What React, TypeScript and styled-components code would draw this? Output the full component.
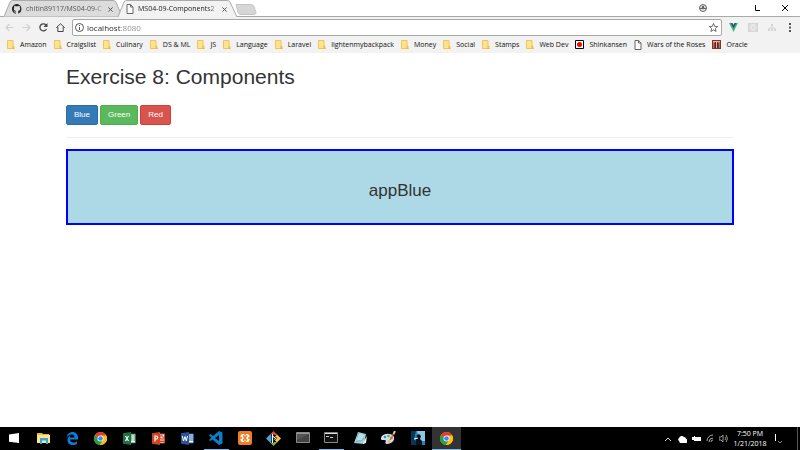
import React, { useState } from "react";
import styled, { createGlobalStyle, css } from "styled-components";

const GlobalStyle = createGlobalStyle`
  * { box-sizing: border-box; }
  body { margin: 0; background: #fff; }
  button, input { font: inherit; margin: 0; }
`;

const ui = `"Open Sans", "Noto Sans", sans-serif`;
const page = `"Liberation Sans", Arial, sans-serif`;

const Screen = styled.div`
  min-height: 100vh;
  display: flex;
  flex-direction: column;
  font-family: ${ui};
  font-size: 7px;
  line-height: 10px;
  color: #222;
`;

const TabStrip = styled.header`
  display: flex;
  align-items: stretch;
  height: 17px;
  padding-left: 4px;
  background: #fff;
  border-bottom: 1px solid #a9a9a9;
`;

const Tab = styled.div<{ $active?: boolean }>`
  position: relative;
  width: 120px;
  height: 17px;
  margin-right: -6px;
  padding: 1px 11px 0 8px;
  display: flex;
  align-items: center;
  gap: 4px;
  z-index: ${(p) => (p.$active ? 2 : 1)};
`;

const TabShape = styled.svg`
  position: absolute;
  inset: 0;
  width: 120px;
  height: 17px;
  z-index: -1;
`;

const TabTitle = styled.span<{ $dim?: boolean }>`
  flex: 1;
  white-space: nowrap;
  color: ${(p) => (p.$dim ? "#555" : "#222")};
  mask-image: linear-gradient(90deg, #000 85%, rgb(0 0 0 / 30%));
`;

const IconButton = styled.button`
  border: 0;
  padding: 0;
  background: none;
  color: #555;
  display: grid;
  place-items: center;
  flex: none;
`;

const NewTab = styled(IconButton)`
  margin-left: 3px;
  align-self: flex-start;
  margin-top: 4px;
`;

const WindowControls = styled.div`
  margin-left: auto;
  padding-right: 12px;
  display: flex;
  align-items: center;
  gap: 21px;
`;

const Toolbar = styled.nav`
  height: 21px;
  display: flex;
  align-items: center;
  gap: 7px;
  padding: 0 6px 0 5px;
  background: #f2f2f2;
`;

const NavButtons = styled.div`
  display: flex;
  gap: 8px;
`;

const AddressBar = styled.label`
  flex: 1;
  height: 17px;
  display: flex;
  align-items: center;
  gap: 3px;
  padding: 0 3px 0 2px;
  border: 1px solid #a5aaa5;
  border-radius: 2px;
  background: #fff;
`;

const AddressInput = styled.input`
  flex: 1;
  min-width: 0;
  height: 12px;
  border: 0;
  padding: 0;
  outline: 0;
  font-size: 8px;
  color: transparent;
  background: linear-gradient(90deg, #222 34px, #888 34px);
  background-clip: text;
`;

const Extensions = styled.div`
  display: flex;
  align-items: center;
  gap: 10px;
`;

const Bookmarks = styled.nav`
  height: 15px;
  display: flex;
  align-items: center;
  gap: 7px;
  padding: 0 7px 2px;
  background: #f2f2f2;
  overflow: hidden;
`;

const Bookmark = styled.a`
  display: flex;
  align-items: center;
  gap: 5px;
  flex: none;
  color: #111;
  text-decoration: none;
  white-space: nowrap;
`;

const Main = styled.main`
  flex: 1;
  width: calc(100% - 132px);
  margin: 0 auto;
  font-family: ${page};
  color: #333;
`;

const Title = styled.h1`
  margin: 12px 0 16px;
  font-size: 21px;
  line-height: 24px;
  font-weight: 400;
`;

const ButtonRow = styled.div`
  display: flex;
  gap: 2px;
`;

const tones = {
  blue: css`background: #337ab7; border-color: #2e6da4;`,
  green: css`background: #5cb85c; border-color: #4cae4c;`,
  red: css`background: #d9534f; border-color: #d43f3a;`,
};

const ColorButton = styled.button<{ $tone: keyof typeof tones }>`
  height: 20px;
  padding: 0 7px;
  border: 1px solid;
  border-radius: 2px;
  font-size: 8px;
  line-height: 12px;
  color: #fff;
  ${(p) => tones[p.$tone]}
`;

const Divider = styled.hr`
  margin: 12px 0 11px;
  border: 0;
  border-top: 1px solid #eee;
`;

const Panel = styled.section<{ $fill: string; $edge: string }>`
  padding: 30px 12px 22px;
  border: 2px solid ${(p) => p.$edge};
  background: ${(p) => p.$fill};
  text-align: center;
`;

const PanelTitle = styled.h2`
  margin: 0;
  font-size: 17px;
  line-height: 20px;
  font-weight: 400;
`;

const Taskbar = styled.footer`
  height: 23px;
  display: flex;
  justify-content: space-between;
  background: #000;
  color: #fff;
`;

const Apps = styled.div`
  width: 461px;
  display: grid;
  grid-template-columns: repeat(16, 1fr);
`;

const AppButton = styled.button<{ $state?: string }>`
  border: 0;
  padding: 0 0 1px;
  margin: 0 ${(p) => (p.$state === "open" ? 2 : 0)}px;
  display: grid;
  place-items: center;
  background: ${(p) => (p.$state === "active" ? "#333" : "none")};
  box-shadow: ${(p) => (p.$state ? "inset 0 -1px #76b9ed" : "none")};
`;

const Tray = styled.div`
  display: flex;
  align-items: center;
  gap: 5px;
  padding-right: 1px;
`;

const Clock = styled.time`
  width: 34px;
  text-align: center;
  line-height: 10px;
  white-space: nowrap;
`;

const ShowDesktop = styled.button`
  width: 2px;
  height: 23px;
  padding: 0;
  margin-left: 6px;
  border: 0;
  border-left: 1px solid #555;
  background: none;
`;

const Folder = () => (
  <svg width="8" height="9" viewBox="0 0 8 9">
    <path d="M0.5 0.5h5.5v5.5h1v2.5h-6.500z" fill="#ffe391" stroke="#eec654" />
    <path d="M6 6v2.500h1.500" fill="none" stroke="#e5b73d" />
  </svg>
);

const FileIcon = () => (
  <svg width="8" height="10" viewBox="0 0 8 10">
    <path d="M1 .5h3.500L7 3v6.500H1z" fill="#fff" stroke="#666" />
    <path d="M4.500.5V3H7" fill="none" stroke="#666" />
  </svg>
);

const Flag = () => (
  <svg width="9" height="9" viewBox="0 0 9 9">
    <path d="M.5.5h8v8h-8z" fill="#fff" stroke="#000" />
    <circle cx="4.500" cy="4.500" r="2.500" fill="#e00" />
  </svg>
);

const OracleIcon = () => (
  <svg width="9" height="9" viewBox="0 0 9 9">
    <path d="M0 0h9v9H0z" fill="#8b3024" />
    <path d="M2 1v7M4.500 1v7M7 1v7M1 1.500h7" stroke="#d9b7aa" />
    <path d="M3 3v5M6 3v5" stroke="#3a1712" />
  </svg>
);

const GitHub = () => (
  <svg width="10" height="10" viewBox="0 0 16 16">
    <path fill="#222" d="M8 0C3.580 0 0 3.580 0 8c0 3.540 2.290 6.530 5.470 7.590.4.070.55-.17.55-.38v-1.500C4 14.150 3.480 12.700 3.350 12.350c-.1-.23-.48-.94-.82-1.130-.28-.15-.68-.52-.01-.53.63-.01 1.080.58 1.230.82.720 1.210 1.870.87 2.330.66.070-.52.280-.87.510-1.070-1.780-.2-3.640-.89-3.640-3.950 0-.87.310-1.590.820-2.150-.08-.2-.36-1.020.080-2.120 0 0 .67-.21 2.200.82a7.600 7.600 0 0 1 4 0c1.530-1.040 2.200-.82 2.200-.82.440 1.100.160 1.920.080 2.120.510.560.820 1.270.820 2.150 0 3.070-1.870 3.750-3.650 3.950.290.250.540.730.540 1.480v2.200c0 .21.150.46.550.38A8 8 0 0 0 8 0z" />
  </svg>
);

const Close = ({ size = 5 }: { size?: number }) => (
  <svg width={size} height={size} viewBox="0 0 6 6">
    <path d="M.5.5l5 5M5.500.5l-5 5" stroke="currentColor" strokeWidth="1.200" />
  </svg>
);

const Arrow = ({ back }: { back?: boolean }) => (
  <svg width="9" height="9" viewBox="0 0 9 9" fill="none" stroke="#d0d0d0" strokeWidth="1.200">
    <path d={back ? "M8.500 4.500H1M4.500 1L1 4.500 4.500 8" : "M.5 4.500H8M4.500 1L8 4.500 4.500 8"} />
  </svg>
);

const Chrome = () => (
  <svg width="13" height="13" viewBox="0 0 26 26">
    <circle cx="13" cy="13" r="13" fill="#fbc116" />
    <path d="M13 13L1.700 6.500A13 13 0 0 1 24.300 6.500z" fill="#e33b2e" />
    <path d="M13 13L1.700 6.500A13 13 0 0 0 12 26L18.600 16z" fill="#2c9d48" />
    <path d="M13 7h11.600a13 13 0 0 1-12.600 19l6.500-10z" fill="#fbc116" />
    <circle cx="13" cy="13" r="6" fill="#fff" />
    <circle cx="13" cy="13" r="4.600" fill="#4285f4" />
  </svg>
);

const Office = ({ color, kind }: { color: string; kind: "excel" | "powerpoint" | "word" }) => (
  <svg width="13" height="13" viewBox="0 0 13 13">
    <path d="M6 2h6.500v9H6z" fill="#fff" stroke={color} />
    {kind === "excel" && <path d="M8 4h1.500M10.500 4H12M8 6h1.500M10.500 6H12M8 8h1.500M10.500 8H12" stroke={color} strokeWidth="1" />}
    {kind === "powerpoint" && <path d="M8 8h4M8 9.500h4M10 3v2h2a2 2 0 1 1-2-2" stroke={color} fill="none" />}
    {kind === "word" && <path d="M7 4h5M7 6h5M7 8h5" stroke={color} />}
    <path d="M0 1.300L8 0v13l-8-1.300z" fill={color} />
    {kind === "excel" && <path d="M2.500 4l3 5M5.500 4l-3 5" stroke="#fff" strokeWidth="1.200" />}
    {kind === "powerpoint" && <path d="M3 9.500V4h1.200a1.500 1.500 0 0 1 0 3H3" stroke="#fff" fill="none" strokeWidth="1.200" />}
    {kind === "word" && <path d="M1.300 4l1.200 5L4 4.500 5.300 9l1.200-5" stroke="#fff" fill="none" />}
  </svg>
);

const Terminal = ({ prompt }: { prompt?: boolean }) => (
  <svg width="14" height="12" viewBox="0 0 14 12">
    <path d="M.5.5h13v10H.5z" fill={prompt ? "#111" : "#444"} stroke="#888" />
    <path d="M1 1.500h12" stroke={prompt ? "#ddd" : "#999"} />
    {prompt ? <path d="M2 4.500h3M6 5.500h3" stroke="#ccc" /> : <path d="M1 2h12L1 8z" fill="#555" />}
  </svg>
);

const taskApps: { name: string; state?: string; icon: React.ReactNode }[] = [
  { name: "Start", icon: <svg width="10" height="10" viewBox="0 0 10 10"><path d="M0 1.500L10 0v10L0 8.800z" fill="#fff" /></svg> },
  { name: "File Explorer", icon: <svg width="13" height="12" viewBox="0 0 13 12"><path d="M0 1h5l1 1h6v9H0z" fill="#e9b93f" /><path d="M0 3h13v8H0z" fill="#fde48d" /><path d="M3 6h8v6H9V8.500H5V12H3z" fill="#35a5dc" /></svg> },
  { name: "Edge", icon: <svg width="12" height="13" viewBox="0 0 24 26"><path d="M1 12C2 4 7 0 13 0c7 0 11 5 11 11v4H8c0 4 3 6 7 6 3 0 5-1 7-2v5c-2 1-5 2-8 2-7 0-11-4-11-10 0-4 2-7 6-9-1 1-1 3-1 4h9c0-4-2-6-5-6-5 0-9 3-12 7z" fill="#0c7cdb" /></svg> },
  { name: "Chrome", icon: <Chrome /> },
  { name: "Excel", icon: <Office color="#1f7145" kind="excel" /> },
  { name: "PowerPoint", icon: <Office color="#d04525" kind="powerpoint" /> },
  { name: "Word", icon: <Office color="#29569b" kind="word" /> },
  { name: "Visual Studio Code", state: "open", icon: <svg width="14" height="14" viewBox="0 0 28 28"><path d="M20 0l7 3v22l-7 3L7 17l-4 3-3-2 5-5-5-4 3-3 5 4zM20 8l-8 6 8 6z" fill="#0b7fcc" fillRule="evenodd" /></svg> },
  { name: "XAMPP", icon: <svg width="14" height="14" viewBox="0 0 28 28"><rect width="28" height="28" rx="4" fill="#f47b20" /><rect x="5" y="6" width="18" height="16" rx="5" fill="#fff" /><path d="M10 9l8 10M18 9l-8 10" stroke="#f47b20" strokeWidth="3" /><path d="M14 5v4M14 19v4M4 14h4M20 14h4" stroke="#f47b20" strokeWidth="3" /></svg> },
  { name: "Git Bash", icon: <svg width="15" height="15" viewBox="0 0 15 15"><path d="M7.500 0l4 4h-8z" fill="#e84b36" /><path d="M0 7.500l4-4 4 4-4 4z" fill="#46a7df" /><path d="M15 7.500l-4-4-4 4 4 4z" fill="#f2c84b" /><path d="M7.500 15l-4-4h8z" fill="#72b843" /><path d="M6.500 3v9M6.500 5l4 3" stroke="#222" strokeWidth="2.500" /><path d="M6.500 3v9M6.500 5l4 3" stroke="#fff" /></svg> },
  { name: "Console", icon: <Terminal /> },
  { name: "Command Prompt", state: "open", icon: <Terminal prompt /> },
  { name: "Notepad", icon: <svg width="13" height="13" viewBox="0 0 13 13"><path d="M4 0l8 2-2 10-10-1z" fill="#9ed0dc" /><path d="M4 1l7 2-2 5-7 2z" fill="#5f9aac" /><path d="M5 1l6 2-3 5-6 1z" fill="#b8dfe5" /><path d="M9 12l3-1 1-7-3 5z" fill="#e7eced" /></svg> },
  { name: "Paint", icon: <svg width="15" height="14" viewBox="0 0 15 14"><path d="M1 5c3-3 10-3 12 1 1 4-3 7-7 7-2 0-2-2-1-3 0-2-5 0-5-2 0-1 0-2 1-3z" fill="#cfe0ec" /><circle cx="4" cy="6" r="1.200" fill="#3e83d0" /><circle cx="7.500" cy="5" r="1.200" fill="#49a64c" /><circle cx="10.500" cy="7" r="1.200" fill="#d83c34" /><circle cx="8" cy="10.500" r="1.200" fill="#efb52d" /><path d="M9 9l4-7" stroke="#c97834" strokeWidth="1.500" /><path d="M12.500 3L14 0" stroke="#f0c68b" strokeWidth="2" /></svg> },
  { name: "Kindle", icon: <svg width="14" height="14" viewBox="0 0 14 14"><path d="M0 0h14v14H0z" fill="#2384bb" /><path d="M6 0h8v10H8z" fill="#8dc8e3" /><path d="M0 0h5L3 8l4 4v2H0z" fill="#0a3656" /><path d="M6 4l2-1 2 2-1 3 2 2v4H5V9z" fill="#08131b" /><path d="M3 8l4-1" stroke="#fff" /></svg> },
  { name: "Chrome window", state: "active", icon: <Chrome /> },
];

const bookmarks: [string, React.ReactNode?][] = [
  ["Amazon"], ["Craigslist"], ["Culinary"], ["DS & ML"], ["JS"], ["Language"], ["Laravel"],
  ["lightenmybackpack"], ["Money"], ["Social"], ["Stamps"], ["Web Dev"],
  ["Shinkansen", <Flag />], ["Wars of the Roses", <FileIcon />], ["Oracle", <OracleIcon />],
];

const panels = {
  blue: { label: "appBlue", fill: "lightblue", edge: "blue" },
  green: { label: "appGreen", fill: "lightgreen", edge: "green" },
  red: { label: "appRed", fill: "lightcoral", edge: "red" },
};

export default function App() {
  const [tone, setTone] = useState<keyof typeof panels>("blue");
  const panel = panels[tone];
  return (
    <Screen>
      <GlobalStyle />
      <TabStrip>
        <Tab>
          <TabShape viewBox="0 0 120 17"><path d="M0 16.500L6 2Q7 .5 9 .5H109Q111 .5 112 2L118 16.500" fill="#dcdcdc" stroke="#aaa" /></TabShape>
          <GitHub />
          <TabTitle $dim>chitin89117/MS04-09-C</TabTitle>
          <IconButton aria-label="Close GitHub tab"><Close /></IconButton>
        </Tab>
        <Tab $active>
          <TabShape viewBox="0 0 120 17"><path d="M0 17L6 2Q7 .5 9 .5H109Q111 .5 112 2L119 17" fill="#f2f2f2" stroke="#aaa" /></TabShape>
          <FileIcon />
          <TabTitle>MS04-09-Components2</TabTitle>
          <IconButton aria-label="Close Components tab"><Close /></IconButton>
        </Tab>
        <NewTab aria-label="New tab"><svg width="22" height="11" viewBox="0 0 22 11"><path d="M1 .5h15q2 0 3 2l2 6q0 2-2 2H6q-2 0-3-2z" fill="#d6d6d6" stroke="#c4c4c4" /></svg></NewTab>
        <WindowControls>
          <IconButton aria-label="Profile"><svg width="8" height="8" viewBox="0 0 8 8"><circle cx="4" cy="4" r="3.500" fill="#ddd" stroke="#666" /><path d="M1 4h6v1H1zM3 2h2v2H3z" fill="#666" /></svg></IconButton>
          <IconButton aria-label="Minimize"><svg width="6" height="6" /></IconButton>
          <IconButton aria-label="Maximize"><svg width="6" height="6" viewBox="0 0 6 6"><path d="M.5 0v5.500H5" fill="none" stroke="#000" /></svg></IconButton>
          <IconButton aria-label="Close window"><svg width="6" height="6" viewBox="0 0 6 6"><path d="M0 0l6 6M6 0L0 6" stroke="#000" /></svg></IconButton>
        </WindowControls>
      </TabStrip>
      <Toolbar aria-label="Browser toolbar">
        <NavButtons>
          <IconButton aria-label="Back"><Arrow back /></IconButton>
          <IconButton aria-label="Forward"><Arrow /></IconButton>
          <IconButton aria-label="Reload"><svg width="9" height="9" viewBox="0 0 9 9"><path d="M7.500 6A3.500 3.500 0 1 1 7 2" fill="none" stroke="#444" strokeWidth="1.300" /><path d="M8.500 0v4h-4z" fill="#444" /></svg></IconButton>
          <IconButton aria-label="Home"><svg width="9" height="9" viewBox="0 0 9 9"><path d="M.3 4.700L4.500.7l4.200 4M1.800 4v4.500h5.400V4" fill="none" stroke="#444" /></svg></IconButton>
        </NavButtons>
        <AddressBar>
          <svg width="9" height="9" viewBox="0 0 9 9"><circle cx="4.500" cy="4.500" r="4" fill="none" stroke="#555" /><path d="M4.500 4v3M4.500 2v1" stroke="#555" /></svg>
          <AddressInput aria-label="Address" defaultValue="localhost:8080" />
          <svg width="9" height="9" viewBox="0 0 18 18"><path d="M9 1l2.300 5.700 6 .4-4.600 3.900 1.500 6L9 13.700 3.800 17l1.500-6L.7 7.100l6-.4z" fill="none" stroke="#555" strokeWidth="1.700" /></svg>
        </AddressBar>
        <Extensions>
          <IconButton aria-label="Vue devtools"><svg width="9" height="9" viewBox="0 0 18 18"><path d="M0 0h18L9 18z" fill="#41b883" /><path d="M3.500 0h11L9 10.500z" fill="#35495e" /><path d="M7 0h4L9 4z" fill="#f2f2f2" /></svg></IconButton>
          <IconButton aria-label="React devtools"><svg width="10" height="9" viewBox="0 0 10 9"><path d="M0 0h10v9H0z" fill="#d4d4d4" /><g fill="none" stroke="#f0f0f0" strokeWidth=".7"><ellipse cx="5" cy="4.500" rx="4" ry="1.500" /><ellipse cx="5" cy="4.500" rx="4" ry="1.500" transform="rotate(60 5 4.500)" /><ellipse cx="5" cy="4.500" rx="4" ry="1.500" transform="rotate(120 5 4.500)" /></g></svg></IconButton>
          <IconButton aria-label="Site structure"><svg width="8" height="8" viewBox="0 0 8 8"><path d="M4 1v3M1 6V4h6v2" fill="none" stroke="#d4d4d4" /><path d="M3 0h2v2H3zM0 5h2v2H0zM3 5h2v2H3zM6 5h2v2H6z" fill="#d4d4d4" /></svg></IconButton>
          <IconButton aria-label="Menu"><svg width="8" height="9" viewBox="0 0 8 9"><path d="M3 0h2v2H3zM3 3.500h2v2H3zM3 7h2v2H3z" fill="#555" /></svg></IconButton>
        </Extensions>
      </Toolbar>
      <Bookmarks aria-label="Bookmarks">
        {bookmarks.map(([name, icon]) => <Bookmark key={name} href="#">{icon ?? <Folder />}{name}</Bookmark>)}
      </Bookmarks>
      <Main>
        <Title>Exercise 8: Components</Title>
        <ButtonRow>
          <ColorButton $tone="blue" onClick={() => setTone("blue")}>Blue</ColorButton>
          <ColorButton $tone="green" onClick={() => setTone("green")}>Green</ColorButton>
          <ColorButton $tone="red" onClick={() => setTone("red")}>Red</ColorButton>
        </ButtonRow>
        <Divider />
        <Panel $fill={panel.fill} $edge={panel.edge}><PanelTitle>{panel.label}</PanelTitle></Panel>
      </Main>
      <Taskbar>
        <Apps>{taskApps.map((app) => <AppButton key={app.name} aria-label={app.name} $state={app.state}>{app.icon}</AppButton>)}</Apps>
        <Tray>
          <svg width="8" height="8" viewBox="0 0 8 8"><path d="M1 6l3-3 3 3" fill="none" stroke="#ddd" /></svg>
          <svg width="10" height="8" viewBox="0 0 10 8"><path d="M2 6a2 2 0 0 1 0-3 3 3 0 0 1 5-1 2 2 0 0 1 2 2 2 2 0 0 1 0 4H3z" fill="#fff" /></svg>
          <svg width="9" height="8" viewBox="0 0 9 8"><path d="M0 2h2V1h1v1h6v4H2V5H0z" fill="#fff" /></svg>
          <svg width="8" height="9" viewBox="0 0 8 9"><path d="M1 7a6 6 0 0 1 6-6M3 8a4 4 0 0 1 4-4M5 8a2 2 0 0 1 2-2" fill="none" stroke="#aaa" /></svg>
          <svg width="9" height="9" viewBox="0 0 9 9"><path d="M0 3h2l2-2v7L2 6H0zM6 3a2 2 0 0 1 0 3M7 1q3 3.500 0 7" fill="none" stroke="#999" /></svg>
          <Clock>7:50 PM<br />1/21/2018</Clock>
          <svg width="14" height="12" viewBox="0 0 14 12"><path d="M3.500 1v7" stroke="#fff" /><path d="M6 8l2 2 2-2" fill="none" stroke="#888" /></svg>
          <ShowDesktop aria-label="Show desktop" />
        </Tray>
      </Taskbar>
    </Screen>
  );
}
